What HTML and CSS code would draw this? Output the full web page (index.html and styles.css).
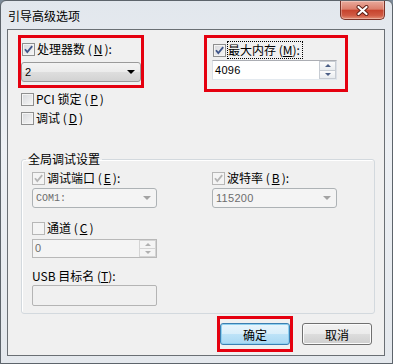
FILE: index.html
```html
<!DOCTYPE html>
<html lang="zh-CN">
  <head>
    <meta charset="UTF-8" />
    <title>引导高级选项</title>
    <link rel="stylesheet" href="styles.css">
  </head>
  <body>
    <div class="window">
      <div class="titlebar">
        <span class="title">引导高级选项</span>
        <button class="close" title="关闭">
          <svg width="13" height="11" viewBox="0 0 13 11">
            <path class="x-outline" d="M2.5 2 L10.5 9 M10.5 2 L2.5 9" />
            <path class="x-fill" d="M2.5 2 L10.5 9 M10.5 2 L2.5 9" />
          </svg>
        </button>
      </div>

      <div class="client">
        <div class="top">
          <div class="col-left">
            <div class="mark mark-cpu">
              <label class="check check-inset">
                <span class="box">
                  <svg width="11" height="11" viewBox="0 0 11 11"><path d="M2 5.2 L4.3 8 L9.2 2.2" /></svg>
                </span>
                处理器数 (<u>N</u>):
              </label>
              <div class="combo combo-on">
                <span class="combo-text">2</span>
                <span class="arrow"></span>
              </div>
            </div>
            <label class="check check-plain"><span class="box"></span>PCI 锁定 (<u>P</u>)</label>
            <label class="check check-plain"><span class="box"></span>调试 (<u>D</u>)</label>
          </div>

          <div class="mark mark-mem">
            <label class="check check-inset">
              <span class="box">
                <svg width="11" height="11" viewBox="0 0 11 11"><path d="M2 5.2 L4.3 8 L9.2 2.2" /></svg>
              </span>
              <span class="focus">最大内存 (<u>M</u>):</span>
            </label>
            <div class="spin">
              <span class="spin-text">4096</span>
              <span class="spin-btns">
                <span class="spin-btn"><span class="up"></span></span>
                <span class="spin-btn"><span class="down"></span></span>
              </span>
            </div>
          </div>
        </div>

        <fieldset class="group">
          <legend>全局调试设置</legend>
          <div class="group-body">
            <div class="group-col">
              <label class="check">
                <span class="box box-off">
                  <svg width="11" height="11" viewBox="0 0 11 11"><path d="M2 5.2 L4.3 8 L9.2 2.2" /></svg>
                </span>
                调试端口 (<u>E</u>):
              </label>
              <div class="combo combo-off">
                <span class="combo-text mono">COM1:</span>
                <span class="arrow"></span>
              </div>
              <label class="check check-gap"><span class="box box-off"></span>通道 (<u>C</u>)</label>
              <div class="spin spin-off">
                <span class="spin-text">0</span>
                <span class="spin-btns">
                  <span class="spin-btn"><span class="up"></span></span>
                  <span class="spin-btn"><span class="down"></span></span>
                </span>
              </div>
              <div class="field-label">USB 目标名 (<u>T</u>):</div>
              <div class="textbox"></div>
            </div>
            <div class="group-col">
              <label class="check">
                <span class="box box-off">
                  <svg width="11" height="11" viewBox="0 0 11 11"><path d="M2 5.2 L4.3 8 L9.2 2.2" /></svg>
                </span>
                波特率 (<u>B</u>):
              </label>
              <div class="combo combo-off">
                <span class="combo-text">115200</span>
                <span class="arrow"></span>
              </div>
            </div>
          </div>
        </fieldset>

        <div class="footer">
          <div class="mark mark-ok">
            <button class="btn btn-default">确定</button>
          </div>
          <button class="btn">取消</button>
        </div>
      </div>
    </div>
  </body>
</html>
```

FILE: styles.css
```css
* {
  box-sizing: border-box;
}
body {
  margin: 0;
  background: #7d8b99;
  font-family: "Noto Sans CJK SC", sans-serif;
  font-size: 12px;
  color: #000;
}
u {
  text-decoration: underline;
  text-underline-offset: 1px;
}

/* window frame */
.window {
  width: 393px;
  height: 364px;
  display: flex;
  flex-direction: column;
  background: linear-gradient(to bottom, #e2e7ed, #edf0f4 40%, #e4e8ed);
  border: 1px solid #5d646b;
  border-radius: 6px 6px 0 0;
}
.titlebar {
  height: 28px;
  display: flex;
  justify-content: space-between;
  align-items: flex-start;
  padding-left: 7px;
}
.title {
  margin-top: 8px;
  line-height: 14px;
}
.close {
  width: 45px;
  height: 19px;
  margin-right: 7px;
  padding: 0;
  display: flex;
  align-items: center;
  justify-content: center;
  border: 1px solid #7a3227;
  border-top: none;
  border-radius: 0 0 5px 5px;
  background: linear-gradient(to bottom, #e9aa9c, #dc7f6c 45%, #c7442e 52%, #d05a43 80%, #e59077);
  box-shadow: inset 0 0 0 1px rgba(255, 255, 255, 0.3);
}
.close path {
  fill: none;
  stroke-linecap: round;
}
.x-outline {
  stroke: #5a1c12;
  stroke-width: 4;
}
.x-fill {
  stroke: #fff;
  stroke-width: 2.2;
}

.client {
  flex: 1;
  margin: 0 7px 7px 6px;
  border: 1px solid #6a6f74;
  background: #f0f0f0;
  display: flex;
  flex-direction: column;
}

/* red annotation boxes */
.mark {
  border: 3px solid #e5000f;
}

.top {
  display: flex;
  align-items: flex-start;
  gap: 60px;
  padding: 5px 0 0 10px;
}
.col-left {
  display: flex;
  flex-direction: column;
}
.mark-cpu {
  width: 126px;
  padding: 3px 0;
}
.mark-mem {
  width: 144px;
  padding: 4px 8px 9px 5px;
}

/* checkbox */
.check {
  display: flex;
  align-items: center;
  gap: 2px;
  height: 16px;
  line-height: 16px;
  white-space: nowrap;
}
.check-inset {
  padding-left: 1px;
}
.check-plain {
  margin-top: 3px;
  padding-left: 3px;
}
.box {
  width: 13px;
  height: 13px;
  flex: none;
  border: 1px solid #8e8f8f;
  background: linear-gradient(135deg, #d6d8db, #f7f7f7);
  box-shadow: inset 0 0 0 1px #f4f4f4;
}
.box svg {
  display: block;
}
.box path {
  fill: none;
  stroke: #3f5589;
  stroke-width: 1.8;
}
.box-off {
  border-color: #b7b7b7;
  background: #f4f4f4;
}
.box-off path {
  stroke: #b4b4b4;
}
.focus {
  outline: 1px dotted #000;
  outline-offset: 0;
  padding-right: 2px;
}

/* combo boxes */
.combo {
  height: 20px;
  display: flex;
  align-items: center;
  justify-content: space-between;
  padding: 0 5px 0 3px;
  border-radius: 3px;
}
.combo-text {
  font-family: "Liberation Sans", sans-serif;
  font-size: 11px;
  letter-spacing: 0.3px;
}
.mono {
  font-family: "Liberation Mono", monospace;
  font-size: 10px;
  letter-spacing: 0;
}
.arrow {
  width: 0;
  height: 0;
  border-left: 4px solid transparent;
  border-right: 4px solid transparent;
  border-top: 4px solid #000;
}
.combo-on {
  margin-top: 5px;
  border: 1px solid #9a9a9a;
  background: linear-gradient(to bottom, #f3f3f3, #ebebeb 50%, #dedede 51%, #d2d2d2);
}
.combo-off {
  margin-top: 2px;
  border: 1px solid #adb2b5;
  background: #f4f4f4;
  color: #6d6d6d;
}
.combo-off .arrow {
  border-top-color: #a3a3a3;
  border-left-width: 4px;
  border-right-width: 4px;
}

/* spin boxes */
.spin {
  width: 125px;
  height: 20px;
  margin-top: 2px;
  display: flex;
  background: #fff;
  border: 1px solid #dbdfe6;
  border-top-color: #abadb3;
  border-bottom-color: #e3e9ef;
}
.spin-text {
  flex: 1;
  padding-left: 2px;
  font-family: "Liberation Sans", sans-serif;
  font-size: 11px;
  letter-spacing: 0.3px;
  line-height: 18px;
}
.spin-btns {
  width: 17px;
  display: flex;
  flex-direction: column;
}
.spin-btn {
  flex: 1;
  display: flex;
  align-items: center;
  justify-content: center;
  border: 1px solid #c7ccd3;
  background: linear-gradient(to bottom, #fbfbfb, #e9ecef);
}
.spin-btn + .spin-btn {
  border-top: none;
}
.up,
.down {
  width: 0;
  height: 0;
  border-left: 3px solid transparent;
  border-right: 3px solid transparent;
}
.up {
  border-bottom: 3px solid #4c5f86;
}
.down {
  border-top: 3px solid #4c5f86;
}
.spin-off {
  height: 19px;
  margin-top: 3px;
  background: #f4f4f4;
  border: 1px solid #b8b8b8;
  color: #6d6d6d;
}
.spin-off .spin-text {
  line-height: 17px;
}
.spin-off .spin-btn {
  border-color: #d4d4d4;
  background: #f4f4f4;
}
.spin-off .up {
  border-bottom-color: #b0b0b0;
}
.spin-off .down {
  border-top-color: #b0b0b0;
}

/* group box */
.group {
  width: 354px;
  margin: 26px 0 0 13px;
  padding: 4px 0 7px 0;
  border: 1px solid #d3d9de;
  border-radius: 3px;
  box-shadow: inset 1px 1px 0 #fff;
  min-width: 0;
}
.group legend {
  margin-left: 4px;
  padding: 0 2px;
  line-height: 14px;
}
.group-body {
  display: flex;
  gap: 55px;
  padding-left: 10px;
}
.group-col {
  width: 125px;
  display: flex;
  flex-direction: column;
}
.check-gap {
  margin-top: 12px;
}
.field-label {
  margin-top: 10px;
  height: 16px;
  line-height: 16px;
  white-space: nowrap;
}
.textbox {
  height: 21px;
  margin-top: 1px;
  border: 1px solid #b4b4b4;
  border-radius: 2px;
  background: #f0f0f0;
}

/* buttons */
.footer {
  margin-top: 2px;
  display: flex;
  justify-content: flex-end;
  align-items: center;
  gap: 9px;
  padding-right: 12px;
}
.mark-ok {
  padding: 4px 0;
}
.btn {
  width: 70px;
  height: 22px;
  padding: 0;
  font-family: "Noto Sans CJK SC", sans-serif;
  font-size: 12px;
  color: #000;
  border: 1px solid #707070;
  border-radius: 3px;
  background: linear-gradient(to bottom, #f2f2f2, #ebebeb 50%, #dddddd 51%, #cfcfcf);
  box-shadow: inset 0 0 0 1px #fbfbfb;
}
.btn-default {
  display: block;
  border-color: #3c7fb1;
  background: linear-gradient(to bottom, #e9f5fc, #d8eefa 50%, #bde3f8 51%, #a9d8f2);
  box-shadow: inset 0 0 0 1px #8fd0f0;
}
```
